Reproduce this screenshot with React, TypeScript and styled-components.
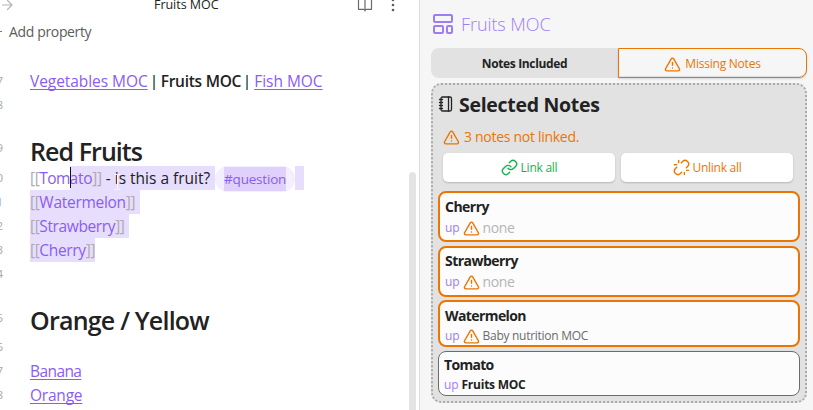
import React from "react";
import styled, { createGlobalStyle, css } from "styled-components";

const purple = "#8a5cf5";
const lilac = "#a07df8";
const orange = "#ec7500";
const ink = "#222222";
const selection = "#e7defd";

const Global = createGlobalStyle`
  * { box-sizing: border-box; }
  body { margin: 0; background: #fff; font-family: "Open Sans", "Noto Sans", sans-serif; color: ${ink}; }
`;

const Page = styled.div`
  display: grid;
  grid-template-columns: 420px 393px;
  width: 813px;
  height: 410px;
  overflow: hidden;
`;

const Label = styled.span<{ $size: number; $track?: number; $weight?: number; $color?: string }>`
  font-size: ${(p) => p.$size}px;
  font-weight: ${(p) => p.$weight ?? 400};
  letter-spacing: ${(p) => p.$track ?? 0}px;
  color: ${(p) => p.$color ?? "inherit"};
  white-space: pre;
`;

/* ---------- editor ---------- */

const Editor = styled.section`
  display: flex;
  position: relative;
  flex-direction: column;
  height: 410px;
  overflow: hidden;
  background: #fff;
  border-right: 1px solid #dedede;
`;

const ViewHeader = styled.header`
  display: grid;
  grid-template-columns: 154px 1fr 50px;
  height: 20px;
  align-items: start;
  padding-right: 24px;
  line-height: 10px;
`;

const HeaderActions = styled.div`
  display: flex;
  gap: 18px;
  justify-content: flex-end;
`;

const PropertyRow = styled.div`
  display: flex;
  align-items: center;
  gap: 7px;
  height: 22px;
  padding-top: 1px;
  line-height: 22px;
  color: #5c5c5c;
`;

const PlusTip = styled.span`
  width: 2px;
  height: 1px;
  background: #777;
`;

const Lines = styled.div`
  display: flex;
  flex-direction: column;
  padding-top: 27px;
`;

const Line = styled.div<{ $h?: number }>`
  display: grid;
  grid-template-columns: 3px 1fr;
  column-gap: 27px;
  height: ${(p) => p.$h ?? 24}px;
  line-height: 24px;
  align-items: start;
`;

const LineNumber = styled.span`
  display: flex;
  justify-content: flex-end;
  font-size: 11.5px;
  color: #a8a8a8;
`;

const LineBody = styled.div`
  display: flex;
  white-space: pre;
`;

const Heading = styled.h2<{ $track: number; $lift: number }>`
  margin: ${(p) => p.$lift}px 0 0;
  font-size: 25px;
  font-weight: 600;
  line-height: 34px;
  letter-spacing: ${(p) => p.$track}px;
  white-space: pre;
`;

const Link = styled.a<{ $track: number }>`
  font-size: 15.5px;
  letter-spacing: ${(p) => p.$track}px;
  color: ${purple};
  text-decoration: underline;
  text-decoration-thickness: 1px;
  text-underline-offset: 2px;
  text-decoration-skip-ink: none;
`;

const Divider = styled.span`
  width: 2px;
  height: 15px;
  margin: 6px 6px 0 5px;
  background: linear-gradient(90deg, #a5823f 50%, #2f86bd 50%);
`;

const Marked = styled.span<{ $on: boolean; $width?: number }>`
  display: flex;
  height: 24px;
  font-size: 15.5px;
  background: ${(p) => (p.$on ? selection : "transparent")};
  ${(p) => p.$width && css`width: ${p.$width}px;`}
`;

const Bracket = styled.span`
  color: #b0aab0;
  font-size: 15.5px;
  letter-spacing: -0.4px;
`;

const Caret = styled.span`
  width: 1px;
  height: 21px;
  margin: 1px -1px 0 0;
  background: #111;
  z-index: 1;
`;

const Tag = styled.span`
  display: flex;
  height: 26px;
  padding: 0 9px;
  border-radius: 13px;
  background: #f3effe;
`;

const TagText = styled.span`
  width: 62px;
  height: 24px;
  margin-top: 1px;
  line-height: 25px;
  font-size: 13.5px;
  letter-spacing: -0.21px;
  color: ${purple};
  background: #dfd1fc;
`;

const ScrollThumb = styled.div`
  position: absolute;
  right: 3px;
  top: 172px;
  width: 7px;
  height: 260px;
  border-radius: 4px;
  background: #e4e4e4;
`;

const TextPointer = styled.svg`
  position: absolute;
  left: 114px;
  top: 174px;
  fill: none;
  stroke: #fbf8ff;
`;

/* ---------- side panel ---------- */

const Panel = styled.aside`
  display: flex;
  flex-direction: column;
  height: 410px;
  padding: 12px 6px 0 11px;
  background: #f6f6f6;
`;

const PanelTitle = styled.div`
  display: flex;
  align-items: center;
  gap: 6px;
  height: 24px;
  margin-bottom: 12px;
  line-height: 24px;
`;

const Tabs = styled.div`
  display: grid;
  grid-template-columns: 187px 189px;
  height: 30px;
`;

const Tab = styled.button<{ $active?: boolean }>`
  display: flex;
  align-items: center;
  justify-content: center;
  gap: 4px;
  padding: 2px 0 0;
  font-family: inherit;
  line-height: 18px;
  ${(p) =>
    p.$active
      ? css`
          color: ${orange};
          background: #f6f6f6;
          border: 1px solid ${orange};
          border-radius: 0 8px 8px 0;
          box-shadow: inset 0 -1px 0 #ddd, 0 1px 2px #0002;
        `
      : css`
          color: ${ink};
          background: #e2e2e2;
          border: 0;
          border-radius: 8px 0 0 8px;
        `}
`;

const Box = styled.div`
  display: flex;
  flex-direction: column;
  width: 376px;
  height: 320px;
  margin-top: 5px;
  padding: 0 5px;
  border: 2px dotted #aaa;
  border-radius: 10px;
  background: #e2e2e2;
`;

const BoxTitle = styled.h3`
  display: flex;
  align-items: center;
  gap: 5px;
  height: 28px;
  margin: 6px 0 0;
  line-height: 28px;
`;

const Warning = styled.div`
  display: flex;
  align-items: center;
  gap: 4px;
  height: 22px;
  margin: 7px 0 4px 5px;
  line-height: 22px;
  color: ${orange};
`;

const Actions = styled.div`
  display: grid;
  grid-template-columns: 172px 172px;
  column-gap: 6px;
  height: 29px;
  margin: 1px 0 9px 5px;
`;

const Action = styled.button<{ $color: string }>`
  display: flex;
  align-items: center;
  justify-content: center;
  gap: 3px;
  height: 29px;
  padding: 0;
  font-family: inherit;
  line-height: 18px;
  color: ${(p) => p.$color};
  background: #fff;
  border: 0;
  border-radius: 5px;
  box-shadow: 0 1px 2px #0003;
`;

const Cards = styled.div`
  display: flex;
  flex-direction: column;
  gap: 4px;
`;

const Card = styled.div<{ $h: number; $pad: number; $tight?: boolean; $linked?: boolean }>`
  display: flex;
  flex-direction: column;
  width: 362px;
  height: ${(p) => p.$h}px;
  margin-top: ${(p) => (p.$tight ? -1 : 0)}px;
  padding: ${(p) => p.$pad}px 5px 0;
  background: #fcfcfc;
  border: ${(p) => (p.$linked ? "1px solid #6b6b6b" : `2px solid ${orange}`)};
  border-radius: 8px;
`;

const CardTitle = styled.div`
  height: 19px;
  line-height: 19px;
  display: flex;
`;

const CardMeta = styled.div<{ $h: number }>`
  display: flex;
  align-items: center;
  gap: 3px;
  height: ${(p) => p.$h}px;
  margin-top: 2px;
  line-height: ${(p) => p.$h}px;
`;

const Svg = styled.svg`
  flex: none;
  display: block;
  fill: none;
  stroke: currentColor;
  stroke-linecap: round;
  stroke-linejoin: round;
`;

const NotebookSvg = styled(Svg)`
  margin-top: -2px;
`;

const Triangle = () => (
  <Svg width="17" height="17" viewBox="0 0 24 24" strokeWidth="2" color={orange}>
    <path d="m21.7 18-8-14a2 2 0 0 0-3.5 0l-8 14A2 2 0 0 0 4 21h16a2 2 0 0 0 1.7-3Z" />
    <path d="M12 9v4M12 17h.01" />
  </Svg>
);

const ChainIcon = () => (
  <Svg width="17" height="17" viewBox="0 0 24 24" strokeWidth="2">
    <path d="M10 13a5 5 0 0 0 7.54.54l3-3a5 5 0 0 0-7.07-7.07l-1.72 1.71" />
    <path d="M14 11a5 5 0 0 0-7.54-.54l-3 3a5 5 0 0 0 7.07 7.07l1.71-1.71" />
  </Svg>
);

const BrokenChainIcon = () => (
  <Svg width="17" height="17" viewBox="0 0 24 24" strokeWidth="2">
    <path d="m18.84 12.25 1.72-1.71a5 5 0 0 0-7.07-7.07l-1.72 1.71" />
    <path d="m5.17 11.75-1.71 1.71a5 5 0 0 0 7.07 7.07l1.71-1.71" />
    <path d="M8 2v3M2 8h3M16 19v3M19 16h3" />
  </Svg>
);

const WikiLine = ({ n, name, track, width }: { n: string; name: string; track: number; width: number }) => (
  <Line>
    <LineNumber>{n}</LineNumber>
    <LineBody>
      <Marked $on $width={width}>
        <Bracket>[[</Bracket>
        <Label $size={15.5} $track={track} $color={purple}>{name}</Label>
        <Bracket>]]</Bracket>
      </Marked>
    </LineBody>
  </Line>
);

const NoteCard = ({ title, track, h, pad, metaH, tight, children }: {
  title: string; track: number; h: number; pad: number; metaH: number; tight?: boolean; children: React.ReactNode;
}) => (
  <Card $h={h} $pad={pad} $tight={tight}>
    <CardTitle><Label $size={14} $weight={700} $track={track}>{title}</Label></CardTitle>
    <CardMeta $h={metaH}>
      <Label $size={12} $track={-0.1} $color={lilac}>up</Label>
      <Triangle />
      {children}
    </CardMeta>
  </Card>
);

export default function App() {
  return (
    <>
      <Global />
      <Page>
        <Editor>
          <ViewHeader>
            <Svg width="14" height="11" viewBox="0 0 14 11" strokeWidth="1.2" color="#b5b5b5">
              <path d="M2.5 5h9M7.5 .5 12 5 7.5 9.5" />
            </Svg>
            <Label $size={12.5} $track={-0.04}>Fruits MOC</Label>
            <HeaderActions>
              <Svg width="16" height="12" viewBox="0 0 16 12" strokeWidth="1.2" color="#6b6b6b">
                <path d="M1.500-4v13.300H6.500q1.500 0 1.500 1.500 0-1.500 1.500-1.500h5V-4M8-4v15" />
              </Svg>
              <Svg width="4" height="12" viewBox="0 0 4 12" color="#5c5c5c">
                <circle cx="2" cy="0" r="1.3" fill="currentColor" stroke="none" />
                <circle cx="2" cy="5" r="1.3" fill="currentColor" stroke="none" />
                <circle cx="2" cy="10" r="1.3" fill="currentColor" stroke="none" />
              </Svg>
            </HeaderActions>
          </ViewHeader>
          <PropertyRow>
            <PlusTip />
            <Label $size={14} $track={-0.35}>Add property</Label>
          </PropertyRow>
          <Lines>
            <Line>
              <LineNumber>7</LineNumber>
              <LineBody>
                <Link $track={-0.06}>Vegetables MOC</Link>
                <Divider />
                <Label $size={15.5} $weight={600} $track={-0.26}>Fruits MOC</Label>
                <Divider />
                <Link $track={-0.02}>Fish MOC</Link>
              </LineBody>
            </Line>
            <Line $h={43}><LineNumber>8</LineNumber></Line>
            <Line $h={29.5}>
              <LineNumber>9</LineNumber>
              <Heading $track={-0.94} $lift={-2}>Red Fruits</Heading>
            </Line>
            <Line>
              <LineNumber>0</LineNumber>
              <LineBody>
                <Marked $on={false}>
                  <Bracket>[[</Bracket>
                  <Label $size={15.5} $track={-0.65} $color={purple}>Tom</Label>
                </Marked>
                <Caret />
                <Marked $on $width={145.5}>
                  <Label $size={15.5} $track={-0.25} $color={purple}>ato</Label>
                  <Bracket>]]</Bracket>
                  <Label $size={15.5}> - is this a fruit?</Label>
                </Marked>
                <Tag><TagText>#question</TagText></Tag>
                <Marked $on $width={9} />
              </LineBody>
            </Line>
            <WikiLine n="1" name="Watermelon" track={-0.28} width={110} />
            <WikiLine n="2" name="Strawberry" track={-0.38} width={99} />
            <WikiLine n="3" name="Cherry" track={-0.33} width={65} />
            <Line $h={44.5}><LineNumber>4</LineNumber></Line>
            <Line $h={29}>
              <LineNumber>5</LineNumber>
              <Heading $track={-0.78} $lift={-3}>Orange / Yellow</Heading>
            </Line>
            <Line><LineNumber>6</LineNumber></Line>
            <Line>
              <LineNumber>7</LineNumber>
              <LineBody><Link $track={-0.58}>Banana</Link></LineBody>
            </Line>
            <Line>
              <LineNumber>8</LineNumber>
              <LineBody><Link $track={-0.22}>Orange</Link></LineBody>
            </Line>
          </Lines>
          <ScrollThumb />
          <TextPointer width="7" height="16" viewBox="0 0 7 16">
            <path d="M.5 .5h2l1 1 1-1h2M3.5 1v14M.5 15.500h2l1-1 1 1h2" />
          </TextPointer>
        </Editor>

        <Panel>
          <PanelTitle>
            <Svg width="24" height="24" viewBox="0 0 24 24" strokeWidth="2" color={lilac}>
              <rect x="3" y="3" width="18" height="7" rx="1" />
              <rect x="3" y="14" width="9" height="7" rx="1" />
              <rect x="16" y="14" width="5" height="7" rx="1" />
            </Svg>
            <Label $size={18} $weight={300} $track={-0.08} $color={lilac}>Fruits MOC</Label>
          </PanelTitle>
          <Tabs>
            <Tab><Label $size={12} $weight={700} $track={-0.35}>Notes Included</Label></Tab>
            <Tab $active>
              <Triangle />
              <Label $size={12} $track={-0.23}>Missing Notes</Label>
            </Tab>
          </Tabs>
          <Box>
            <BoxTitle>
              <NotebookSvg width="16" height="16" viewBox="0 0 16 16" strokeWidth="1.3">
                <rect x="3" y="1" width="10.500" height="14" rx="1.500" />
                <path d="M10.500 1v14M1.500 3.500h3M1.500 6.500h3M1.500 9.500h3M1.500 12.500h3" />
              </NotebookSvg>
              <Label $size={19.5} $weight={700} $track={-0.3}>Selected Notes</Label>
            </BoxTitle>
            <Warning>
              <Triangle />
              <Label $size={14} $track={-0.29}>3 notes not linked.</Label>
            </Warning>
            <Actions>
              <Action $color="#16b150">
                <ChainIcon />
                <Label $size={12} $track={-0.25}>Link all</Label>
              </Action>
              <Action $color={orange}>
                <BrokenChainIcon />
                <Label $size={12} $track={-0.27}>Unlink all</Label>
              </Action>
            </Actions>
            <Cards>
              <NoteCard title="Cherry" track={-0.51} h={51} pad={4} metaH={20}>
                <Label $size={14} $track={-0.36} $color="#b5b5b5">none</Label>
              </NoteCard>
              <NoteCard title="Strawberry" track={-0.54} h={51} pad={3} metaH={20}>
                <Label $size={14} $track={-0.36} $color="#b5b5b5">none</Label>
              </NoteCard>
              <NoteCard title="Watermelon" track={-0.59} h={47} pad={4} metaH={18} tight>
                <Label $size={12} $track={-0.28} $color="#6b6b6b">Baby nutrition MOC</Label>
              </NoteCard>
              <Card $h={45} $pad={3} $linked>
                <CardTitle><Label $size={14} $weight={700} $track={-0.7}>Tomato</Label></CardTitle>
                <CardMeta $h={18}>
                  <Label $size={12} $track={-0.1} $color={lilac}>up</Label>
                  <Label $size={12} $weight={700} $track={-0.24}>Fruits MOC</Label>
                </CardMeta>
              </Card>
            </Cards>
          </Box>
        </Panel>
      </Page>
    </>
  );
}
